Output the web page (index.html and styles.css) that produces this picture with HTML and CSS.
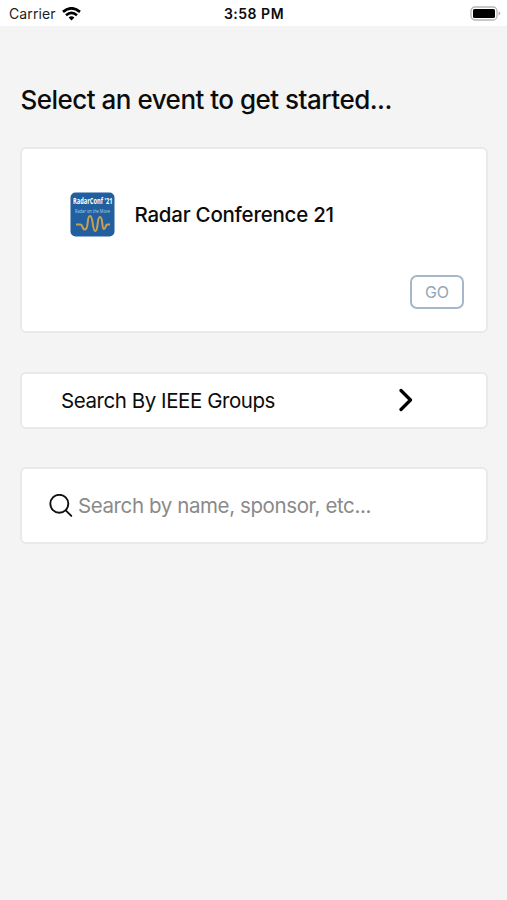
FILE: index.html
```html
<!DOCTYPE html>
<html lang="en">
<head>
<meta charset="utf-8">
<title>Select an event</title>
<link rel="stylesheet" href="styles.css">
</head>
<body>
<header class="status">
  <div class="carrier"><span class="carrier-name">Carrier</span>
    <svg class="wifi" viewBox="0 0 19 14" width="19" height="14" fill="none" stroke="#000" stroke-width="2.7"><path d="M1 4.9Q9.5-2.3 18 4.9M4 8.2Q9.5 3.5 15 8.2"/><path d="M6.6 10.5Q9.5 8 12.4 10.5L9.5 13.5Z" fill="#000" stroke="none"/></svg>
  </div>
  <time class="time">3:58 PM</time>
  <svg class="battery" viewBox="0 0 31 16" width="31" height="16"><rect x="1" y="1" width="26" height="13" rx="4" fill="#fff" stroke="#b5b5b5" stroke-width="1.3"/><rect x="3" y="3" width="22" height="9" rx="1.5"/><path d="M28.6 5.3Q32 7.5 28.6 9.7Z" fill="#aaa"/></svg>
</header>
<main class="content">
  <h1 class="title">Select an event to get started...</h1>
  <section class="card event">
    <div class="event-info">
      <svg class="logo" viewBox="0 0 45 45" width="45" height="45"><rect x="0.5" y="0.5" width="44" height="44" rx="5" fill="#215f9f"/><text x="3" y="11.8" class="logo-name" textLength="39.5" lengthAdjust="spacingAndGlyphs">RadarConf '21</text><text x="5" y="20.5" class="logo-tag" textLength="35" lengthAdjust="spacingAndGlyphs">Radar on the Move</text><path d="M6 32.5H10.5C13 32.5 12 37.5 15 37.5C19 37.5 16.500 24 20 24C23.500 24 22 39 25.300 39C28.500 39 26.700 25 30 25C33.300 25 31.500 37 34 37C36 37 35 32.500 37.500 32.500H40" fill="none" stroke="#c9a052" stroke-width="2"/></svg>
      <h2 class="event-name">Radar Conference 21</h2>
    </div>
    <button class="go">GO</button>
  </section>
  <section class="card groups">
    <span class="groups-label">Search By IEEE Groups</span>
    <svg class="chevron" viewBox="0 0 14 24" width="14" height="24"><path d="M2 2.5L11.5 12L2 21.5" fill="none" stroke="#000" stroke-width="3.2" stroke-linecap="round" stroke-linejoin="round"/></svg>
  </section>
  <label class="card search">
    <svg class="glass" viewBox="0 0 24 24" width="24" height="24" fill="none" stroke="#111" stroke-width="1.9" stroke-linecap="round"><circle cx="10.3" cy="9.8" r="9"/><path d="M16.7 16.3L22.3 21.9"/></svg>
    <input class="query" type="text" placeholder="Search by name, sponsor, etc...">
  </label>
</main>
</body>
</html>
```
FILE: styles.css
```css
* { box-sizing: border-box; }
body { margin: 0; min-height: 900px; background: #f4f4f4; color: #0c0c0c; font-family: Inter, "Liberation Sans", sans-serif; }
.status { display: grid; grid-template-columns: 1fr auto 1fr; align-items: center; height: 26px; padding: 1px 6px 0 9px; background: #fff; }
.carrier { display: flex; align-items: center; gap: 6px; }
.carrier-name { font-size: 14px; letter-spacing: 0.1px; color: #222; }
.wifi { display: block; }
.time { margin-right: 2px; font-size: 14px; font-weight: 600; letter-spacing: 0.5px; }
.battery { display: block; justify-self: end; }
.content { padding: 54px 19px 0 20px; }
.title { margin: 0 0 27px; padding-left: 0.5px; font-size: 26px; line-height: 40px; font-weight: 500; letter-spacing: -0.51px; white-space: nowrap; }
.card { background: #fff; border: 2px solid #e9e9e9; border-radius: 6px; }
.event { display: flex; flex-direction: column; height: 186px; margin-bottom: 39px; padding: 43px 22px 22px 48px; }
.event-info { display: flex; align-items: center; gap: 19px; }
.logo { display: block; }
.logo-name { fill: #fff; font: 700 8.5px "Open Sans", sans-serif; }
.logo-tag { fill: #b4d0e8; font: 400 4.5px "Open Sans", sans-serif; }
.event-name { margin: 0; padding-left: 0.5px; font-size: 20.5px; font-weight: 500; letter-spacing: -0.24px; white-space: nowrap; }
.go { width: 54px; height: 34px; margin: auto 0 0 auto; padding: 0; background: #fff; border: 2px solid #a5b7c8; border-radius: 7px; color: #91a6ba; font: 400 16px Inter, sans-serif; }
.groups { display: flex; align-items: center; justify-content: space-between; height: 57px; margin-bottom: 38px; padding: 0 73px 0 39px; }
.groups-label { font-size: 20.5px; letter-spacing: -0.44px; white-space: nowrap; }
.chevron { display: block; margin-bottom: 2px; }
.search { display: flex; align-items: center; gap: 5px; height: 77px; padding: 0 20px 0 27px; }
.glass { flex: none; }
.query { flex: 1; min-width: 0; padding: 0; border: 0; outline: 0; background: transparent; font: 400 20.5px Inter, sans-serif; letter-spacing: -0.4px; }
.query::placeholder { color: #8a8a8a; opacity: 1; }
```
